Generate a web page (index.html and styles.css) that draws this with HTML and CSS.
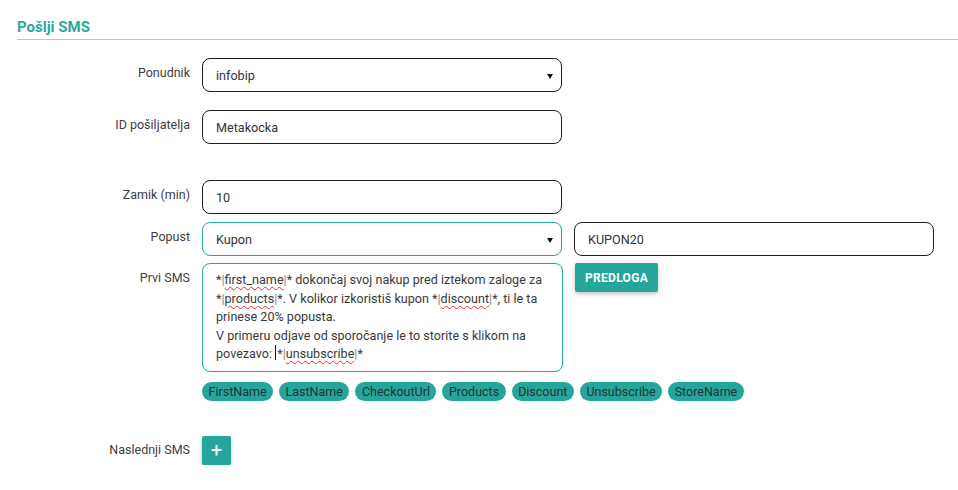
FILE: index.html
```html
<!doctype html>
<html lang="sl">

<head>
    <meta charset="UTF-8" />
    <title>Pošlji SMS</title>
    <link rel="stylesheet" href="styles.css">
</head>

<body>
    <div class="section">
        <h2 class="section-title">Pošlji SMS</h2>

        <div class="row row-provider">
            <label class="label">Ponudnik</label>
            <div class="select-wrap">
                <select class="field">
                    <option>infobip</option>
                </select>
            </div>
        </div>

        <div class="row row-sender">
            <label class="label">ID pošiljatelja</label>
            <input class="field" type="text" value="Metakocka">
        </div>

        <div class="row row-delay">
            <label class="label">Zamik (min)</label>
            <input class="field" type="text" value="10">
        </div>

        <div class="row row-discount">
            <label class="label">Popust</label>
            <div class="select-wrap">
                <select class="field field-active">
                    <option>Kupon</option>
                </select>
            </div>
            <input class="field" type="text" value="KUPON20">
        </div>

        <div class="row row-sms">
            <label class="label">Prvi SMS</label>
            <div class="textarea field-active">
                *<span class="pipe">|</span><span class="typo">first_name</span><span class="pipe">|</span>* dokončaj svoj nakup pred iztekom zaloge za<br>
                *<span class="pipe">|</span><span class="typo">products</span><span class="pipe">|</span>*. V kolikor izkoristiš kupon *<span class="pipe">|</span><span class="typo">discount</span><span class="pipe">|</span>*, ti le ta<br>
                prinese 20% popusta.<br>
                V primeru odjave od sporočanje le to storite s klikom na<br>
                povezavo: <span class="caret"></span>*<span class="pipe">|</span><span class="typo">unsubscribe</span><span class="pipe">|</span>*
            </div>
            <button class="btn">Predloga</button>
        </div>

        <div class="row row-tags">
            <span class="label"></span>
            <div class="tags">
                <span class="tag">FirstName</span>
                <span class="tag">LastName</span>
                <span class="tag">CheckoutUrl</span>
                <span class="tag">Products</span>
                <span class="tag">Discount</span>
                <span class="tag">Unsubscribe</span>
                <span class="tag">StoreName</span>
            </div>
        </div>

        <div class="row row-next">
            <label class="label label-next">Naslednji SMS</label>
            <button class="btn btn-add">+</button>
        </div>
    </div>
</body>

</html>
```

FILE: styles.css
```css
body {
    font-family: Roboto, "Liberation Sans", Arial, sans-serif;
    margin: 0;
    padding: 0;
    background-color: #fff;
    color: #333;
}

.section {
    padding: 18px 0 0 17px;
}

.section-title {
    margin: 0 0 18px 0;
    padding-bottom: 2px;
    font-size: 15px;
    line-height: 19px;
    font-weight: bold;
    color: #2fa89b;
    border-bottom: 1px solid #c4c4c4;
}

.row {
    display: flex;
    align-items: flex-start;
    gap: 12px;
}

.label {
    width: 173px;
    flex: none;
    text-align: right;
    font-size: 12.5px;
    line-height: 16px;
    padding-top: 7px;
    color: #404040;
}

.field {
    box-sizing: border-box;
    width: 360px;
    height: 34px;
    border: 1px solid #1e1e1e;
    border-radius: 8px;
    padding: 0 13px;
    font-family: inherit;
    font-size: 12.6px;
    color: #333;
    background: #fff;
    outline: none;
}

.field-active {
    border-color: #26a69a;
}

select.field {
    appearance: none;
    -webkit-appearance: none;
}

.select-wrap {
    position: relative;
    width: 360px;
    flex: none;
}

.select-wrap::after {
    content: "";
    position: absolute;
    right: 9px;
    top: 16px;
    border-left: 3.5px solid transparent;
    border-right: 3.5px solid transparent;
    border-top: 5px solid #111;
}

.row-sender {
    margin-top: 18px;
}

.row-delay {
    margin-top: 36px;
}

.row-discount {
    margin-top: 8px;
}

.row-sms {
    margin-top: 7px;
}

.textarea {
    box-sizing: border-box;
    width: 361px;
    height: 109px;
    border: 1px solid #26a69a;
    border-radius: 8px;
    padding: 7px 13px;
    font-size: 12.6px;
    line-height: 18.5px;
    color: #3a3a3a;
    white-space: nowrap;
}

.pipe {
    color: #8a8a8a;
}

.typo {
    text-decoration: underline wavy #e03030;
    text-decoration-thickness: 1px;
    text-underline-offset: 2px;
}

.caret {
    display: inline-block;
    width: 1px;
    height: 15px;
    background: #111;
    vertical-align: -2px;
    margin-right: 1px;
}

.btn {
    background-color: #26a69a;
    color: #fff;
    border: none;
    border-radius: 2px;
    font-family: inherit;
    font-weight: bold;
    font-size: 12px;
    text-transform: uppercase;
    letter-spacing: 0.3px;
    height: 29px;
    padding: 0 10px;
    box-shadow: 0 2px 4px rgba(0, 0, 0, 0.25);
}

.row-tags {
    margin-top: 10px;
}

.row-tags .label {
    padding-top: 0;
}

.tags {
    display: flex;
    gap: 6px;
}

.tag {
    background-color: #26a69a;
    color: #1d3533;
    border-radius: 10px;
    font-size: 12.5px;
    line-height: 19px;
    padding: 0 6.5px;
}

.row-next {
    margin-top: 35px;
}

.label-next {
    padding-top: 6px;
}

.btn-add {
    width: 29px;
    height: 29px;
    padding: 0;
    font-size: 20px;
    font-weight: normal;
    line-height: 29px;
}
```
